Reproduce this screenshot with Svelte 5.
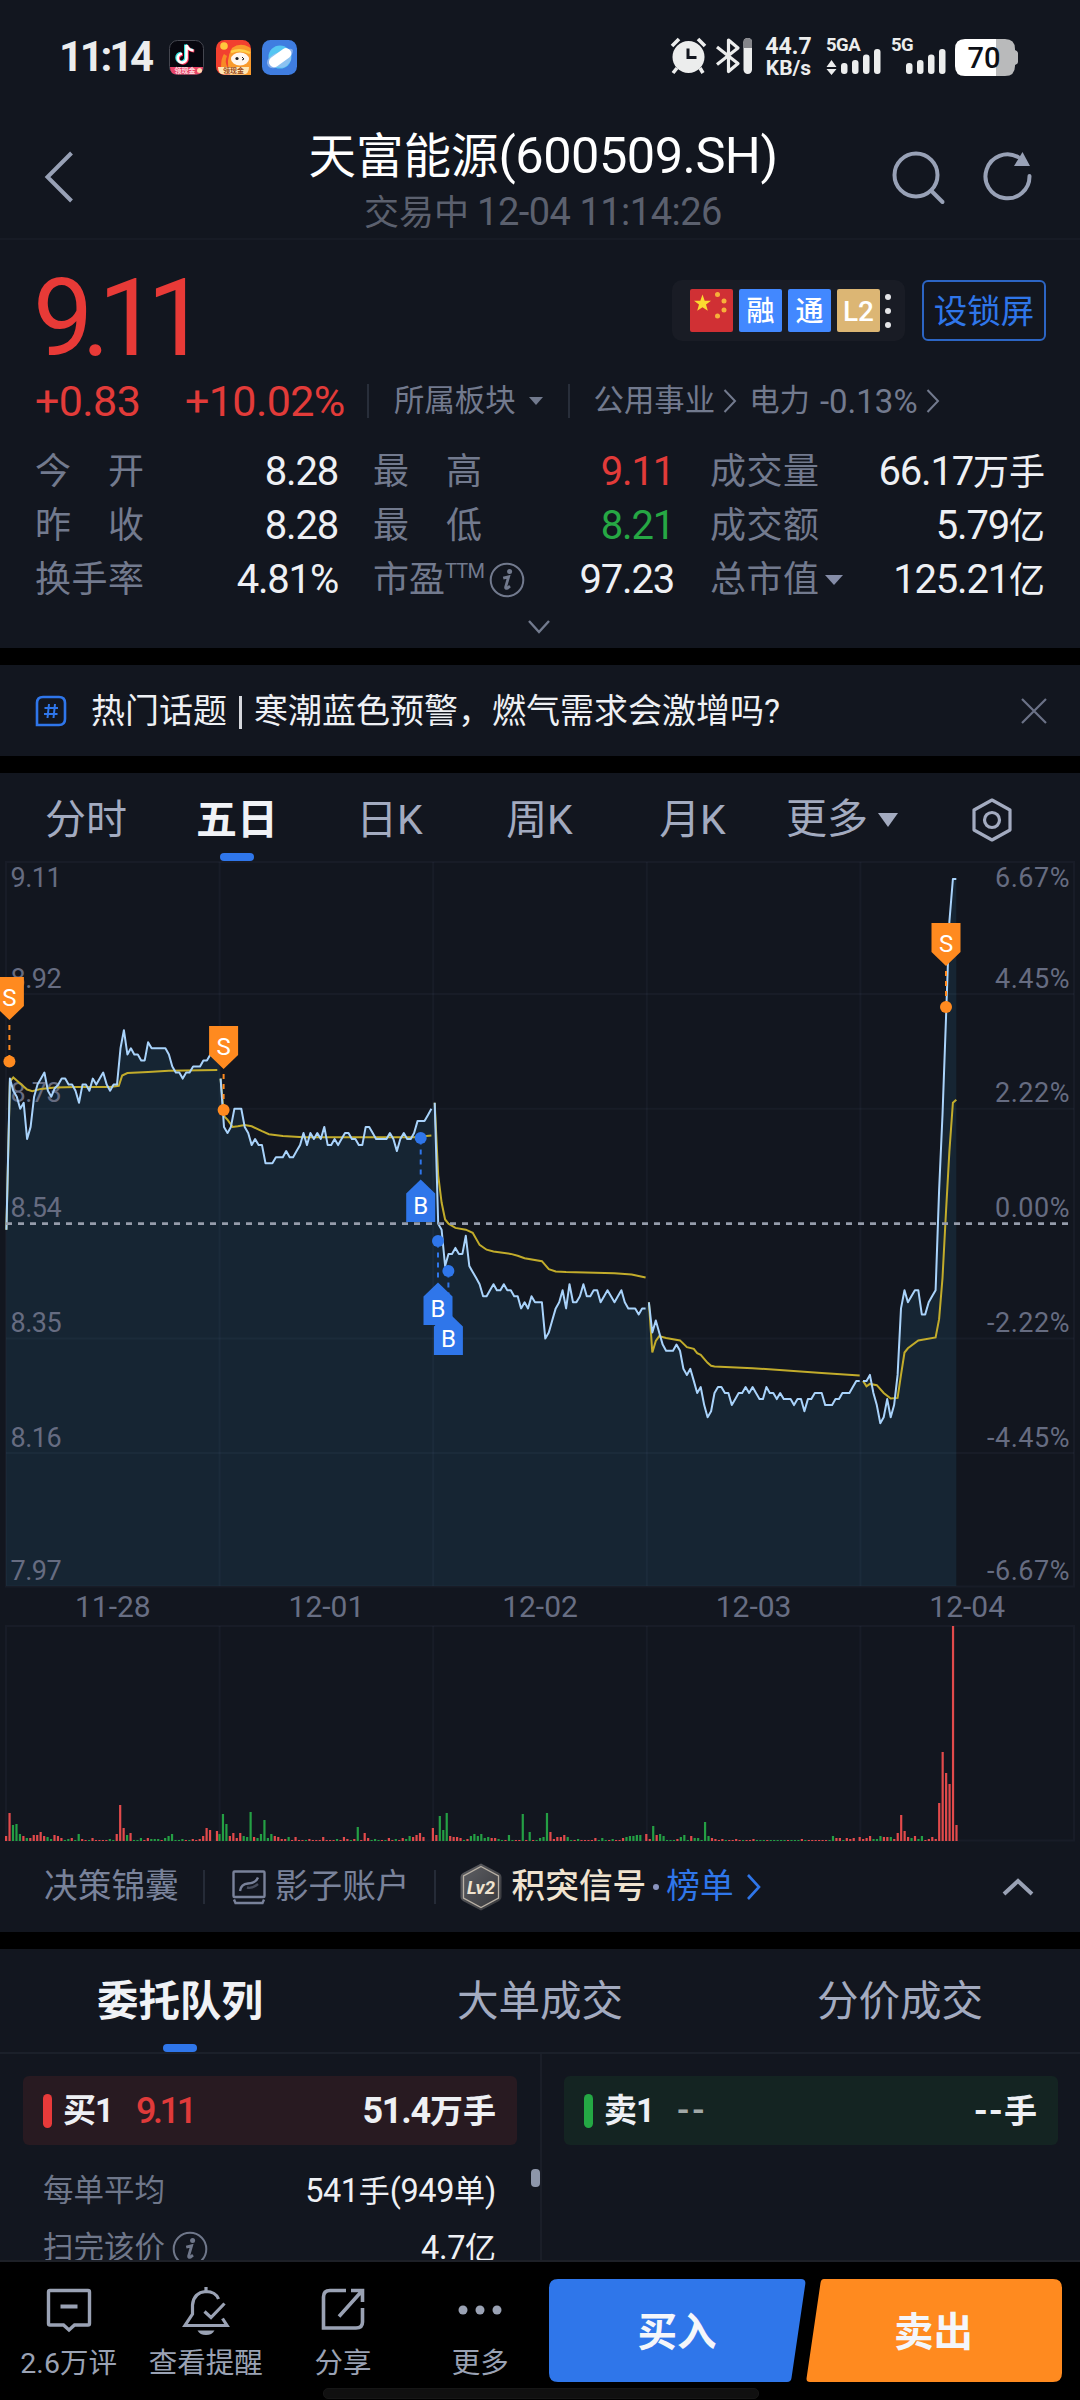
<script>
  // Prices are stored as cents above / below the 8.54 reference price.
  const days = [
    {
      label: '11-28',
      price: [-1, 24, 22, 21, 19, 20, 14, 16, 21, 23, 24, 25, 22, 21, 22.4, 23, 24, 24, 23, 23, 22, 20, 23, 23, 22, 24, 23, 24, 25, 23, 22, 23, 23, 29, 32, 28, 29, 28, 28, 27, 27, 30, 29, 29, 29, 29, 29, 28, 26, 25, 25, 24, 25, 25, 26, 26, 26, 27, 27, 28, 29, 29],
      avg: [[0, -1], [1, 23.5], [2, 24.2], [4, 23.2], [6, 22.2], [7.5, 21.9], [10, 22.3], [14, 22.5], [20, 22.6], [30, 22.6], [32.5, 22.8], [33.5, 24.5], [35, 24.9], [41, 25.1], [47, 25.3], [61, 25.4]],
      volume: [5, 28, -16, -17, -7, 5, -3, 3, 6, 6, 9, 5, -4, -2, 6, 5, 3, -1, -2, 3, -1, -7, 2, 1, -1, 3, 1, 1, 1, 1, -2, -1, 7, 36, 13, -6, 8, -1, -1, -3, 1, 3, -2, -2, -2, 1, -3, -5, -7, -1, -1, -2, 1, -1, 2, 1, 2, 5, 13, 11, 0, 10]
    },
    {
      label: '12-01',
      price: [24, 16, 15, 16, 19, 19, 19, 16, 15, 13, 14, 13, 13, 10, 10, 10, 11, 11, 11, 12, 11, 11, 12, 13, 15, 13, 15, 14, 15, 14, 16, 13, 13, 14, 13, 14, 15, 15, 14, 14, 13, 13, 16, 16, 15, 14, 14, 14, 14, 15, 14, 12, 14, 15, 14, 14, 15, 17, 17, 17, 18, 19],
      avg: [[0, 24], [1, 17.8], [2, 17.2], [3.5, 16], [5, 16.1], [7, 16.3], [9, 16.1], [12, 15.3], [14, 14.8], [18, 14.5], [24, 14.3], [56, 14.3], [61, 14.6]],
      volume: [-7, -27, -17, 5, 8, 3, 8, -5, -4, -29, 4, -3, -7, -21, -3, -7, 5, 4, 2, 2, -4, 1, 4, 1, 1, -1, 2, 1, 1, 1, 4, 1, 1, 1, -2, 1, 4, 2, -1, 2, -14, 1, 8, 3, -1, -2, -1, 1, -1, 3, 1, -2, 1, 3, -2, -5, 4, 6, 8, 4, 0]
    },
    {
      label: '12-02',
      price: [20, 0, -1, -7, -5, -5, -4, -5, -5, -2, -7, -8, -9, -10, -12, -12, -11, -10, -11, -11, -10, -11, -11, -12, -12, -14, -13, -14, -12, -13, -13, -13, -19, -18, -16, -14, -13, -11, -14, -10, -13, -13, -12, -10, -12, -12, -11, -11, -13, -12, -11, -12, -13, -12, -11, -13, -14, -14, -14, -15, -14, -14],
      avg: [[0, 20], [1, 8], [2, 3.5], [3, 0.7], [4, 0], [6, -0.7], [9, -1], [11, -1.5], [13, -3.5], [15, -4.3], [17, -4.6], [22, -5], [24, -5.3], [26, -5.7], [31, -6.2], [33, -7.5], [35, -7.9], [38, -8], [52, -8.2], [57, -8.4], [61, -8.9]],
      volume: [13, 6, -25, -11, -28, 5, 4, 4, 3, -1, 2, -5, -7, -5, -7, -3, -4, 3, 3, -2, -1, 1, -6, -1, 1, 1, -27, 1, -9, 1, -1, -3, -4, -28, 9, 2, 4, 4, 6, -4, -1, 1, -2, 1, 1, 1, 1, 3, -1, -3, -1, 1, -2, 1, 1, 3, -4, -5, -5, -6, -6, 0]
    },
    {
      label: '12-03',
      price: [-13, -18, -16, -18, -20, -21, -21, -21, -20, -21, -24, -25, -24, -26, -28, -27, -30, -32, -31, -28, -27, -27, -28, -28, -30, -29, -28, -28, -27, -28, -27, -28, -29, -29, -27, -28, -28, -29, -28, -29, -29, -29, -30, -29, -29, -31, -29, -29, -28, -28, -28, -30, -30, -30, -29, -29, -28, -28, -28, -27, -26, -26],
      avg: [[0, -13], [1, -21.3], [2, -19.4], [3, -18.6], [5, -18.9], [9, -19.3], [11, -20.4], [13, -20.7], [14, -21.4], [15, -21.7], [17, -23], [18, -23.5], [19, -23.6], [30, -23.9], [50, -24.7], [61, -25.1]],
      volume: [7, 2, -15, 6, -7, -5, -1, -1, -1, 2, -4, -6, -1, 5, -3, -3, -1, -19, -5, 3, 2, 1, 2, -1, 1, 1, 2, 1, -1, 1, 1, 2, -1, -1, -1, 1, -1, -1, -1, -1, -1, 1, -1, -1, -1, 2, -1, 1, 1, 1, 1, 1, 1, -1, -5, 3, 3, -1, 3, 2, 3, 0]
    },
    {
      label: '12-04',
      price: [-26, -26, -25, -28, -30, -33, -32, -29, -32, -30, -25, -14, -11, -13, -12, -11, -11, -15, -15, -13, -12, -11, 5.5, 18, 34, 50, 57, 57],
      avg: [[0, -26], [1, -26.9], [2, -26.5], [4, -26.7], [6, -28], [8, -28.9], [10, -28.8], [11, -25], [12, -21.3], [13, -20.6], [16, -19.3], [21, -18.8], [22, -15.8], [23, -9], [24, 2], [25, 12], [26, 20], [27, 20.5]],
      volume: [4, 2, 3, 5, -2, -2, -5, 4, 4, -4, 2, 8, 26, 10, 4, -3, 5, -2, -5, 1, 2, 4, 2, 38, 89, 68, 57, 215, 16]
    }
  ];

  const TOP = 861;
  const DAY = 213.6;
  const STEP = 3.457;
  const BASE = 1586 - TOP;
  const px = (d, i) => 6.4 + d * 214.15 + i * STEP;
  const py = (c) => 1223.7 - TOP - c * 6.047;
  const path = (d, pts) =>
    pts.map(([i, c], n) => (n ? 'L' : 'M') + px(d, i).toFixed(1) + ' ' + py(c).toFixed(1)).join('');

  const priceLines = days.map((day, d) => path(d, day.price.map((c, i) => [i, c])));
  const avgLines = days.map((day, d) => path(d, day.avg));
  const area =
    'M6 ' + BASE +
    days.map((day, d) => day.price.map((c, i) => 'L' + px(d, i).toFixed(1) + ' ' + py(c).toFixed(1)).join('')).join('') +
    'V' + BASE + 'Z';

  const bars = days.flatMap((day, d) =>
    day.volume.map((v, i) => ({ x: 5 + d * 213.4 + i * STEP, h: Math.abs(v), up: v > 0 }))
  );

  const axis = [
    { y: 877.5, price: '9.11', pct: '6.67%' },
    { y: 978, price: '8.92', pct: '4.45%' },
    { y: 1092.5, price: '8.73', pct: '2.22%' },
    { y: 1207.5, price: '8.54', pct: '0.00%' },
    { y: 1322, price: '8.35', pct: '-2.22%' },
    { y: 1437.5, price: '8.16', pct: '-4.45%' },
    { y: 1570, price: '7.97', pct: '-6.67%' }
  ];

  const sells = [
    { x: 9.4, tag: 977, dot: 1061.5 },
    { x: 223.6, tag: 1026, dot: 1110 },
    { x: 946, tag: 923, dot: 1007 }
  ];
  const buys = [
    { x: 420.7, tag: 1179.5, dot: 1138 },
    { x: 438, tag: 1282.5, dot: 1241 },
    { x: 448.4, tag: 1312.5, dot: 1271 }
  ];
</script>

{#snippet info()}
  <svg class="info" width="36" height="36" viewBox="0 0 36 36">
    <circle cx="18" cy="18" r="16.3" fill="none" stroke="currentColor" stroke-width="2" />
    <circle cx="20.6" cy="9.6" r="2.5" fill="currentColor" />
    <path d="M14.2 16.2 L19.6 14.8 L16.6 25.2 Q16.4 27 18.4 26.2 L21 24.2" fill="none" stroke="currentColor" stroke-width="2.8" />
  </svg>
{/snippet}

<div class="screen">
  <div class="status">
    <span class="clock">11:14</span>
    <svg class="app" width="35" height="35" viewBox="0 0 35 35">
      <rect x=".5" y=".5" width="34" height="34" rx="8" fill="#07070f" stroke="#44464f" />
      <path d="M1 27 H34 Q34 34.5 27 34.5 H8 Q1 34.5 1 27Z" fill="#e8456a" />
      <path d="M17.5 5 V18 A4.4 4.4 0 1 1 13 13.8 M17.5 5 Q19 10 24.5 10.5" fill="none" stroke="#35e5e0" stroke-width="3" transform="translate(-1 -.6)" />
      <path d="M17.5 5 V18 A4.4 4.4 0 1 1 13 13.8 M17.5 5 Q19 10 24.5 10.5" fill="none" stroke="#ff3458" stroke-width="3" transform="translate(.8 .6)" />
      <path d="M17.5 5 V18 A4.4 4.4 0 1 1 13 13.8 M17.5 5 Q19 10 24.5 10.5" fill="none" stroke="#fff" stroke-width="2.6" />
      <text x="16" y="33" font-size="7" fill="#ffd9df" text-anchor="middle" font-weight="700">领现金</text>
      <circle cx="30.5" cy="30.5" r="2.5" fill="#ffdcb0" />
    </svg>
    <svg class="app" width="35" height="35" viewBox="0 0 35 35">
      <rect width="35" height="35" rx="8.5" fill="#f2402f" />
      <path d="M14 35 Q9 20 16 8 Q24 2 33 7 Q35 8 35 12 V35Z" fill="#f99a2c" />
      <path d="M5 28 Q5 18 8 14 L11 16 Q8 22 12 28Z" fill="#f78b26" />
      <circle cx="8" cy="6" r="3.8" fill="#ffc83d" />
      <path d="M15 12 Q24 8 34 13" stroke="#ffd04a" stroke-width="2.5" fill="none" />
      <ellipse cx="24" cy="19" rx="9" ry="6.5" fill="#fff6ee" />
      <circle cx="21" cy="18.5" r="1.6" fill="#222" /><path d="M26 17 L28 19 L26 20" stroke="#222" fill="none" />
      <path d="M2 27 H33 Q33 34.5 27 34.5 H8 Q2 34.5 2 27Z" fill="#ffe6b5" />
      <text x="17.5" y="33" font-size="7" fill="#9b4a18" text-anchor="middle" font-weight="700">领现金</text>
    </svg>
    <svg class="app" width="35" height="35" viewBox="0 0 35 35">
      <rect width="35" height="35" rx="8.5" fill="#3f7de0" />
      <circle cx="18" cy="17" r="11.5" fill="#55c6f2" />
      <path d="M6 26 Q2 20 12 14 L26 9 Q34 7 29 16 L29 20 Q24 30 16 27 Q9 30 6 26Z" fill="#9fc0f0" opacity=".75" />
      <rect x="5.5" y="12.5" width="25" height="10.5" rx="5" fill="#fff" transform="rotate(-36 18 17.5)" />
    </svg>
    <svg class="sys" width="96" height="40" viewBox="0 0 96 40" fill="#eceded">
      <circle cx="18.5" cy="20" r="16" />
      <path d="M18 11.5 V20.5 H26.5" fill="none" stroke="#12161f" stroke-width="3" />
      <path d="M2 9 L9 2 M28 2 L35 9 M7 31 L3 36 M30 31 L33 36" stroke="#eceded" stroke-width="3.6" fill="none" />
      <path d="M47 10 L68 26.5 L58.5 34.5 V3 L68 11 L47 27.5" fill="none" stroke="#eceded" stroke-width="3.2" stroke-linejoin="round" />
      <rect x="73.5" y="1" width="8.5" height="36" rx="4.2" />
      <path d="M73.5 11 V5 Q73.5 1 77.75 1 Q82 1 82 5 V11Z" fill="#85868b" />
    </svg>
    <div class="net"><span>44.7</span><span>KB/s</span></div>
    <svg class="signal" width="126" height="40" viewBox="0 0 126 40" fill="#eceded">
      <text x="1" y="14" class="g">5GA</text>
      <path d="M1.5 30 L6.5 23 L11.5 30Z M1.5 32 L6.5 38 L11.5 32Z" />
      <rect x="16" y="26" width="6.5" height="11" rx="3" /><rect x="27" y="23" width="6.5" height="14" rx="3" /><rect x="38" y="17.5" width="6.5" height="19.5" rx="3" /><rect x="49" y="12" width="6.5" height="25" rx="3" />
      <text x="66" y="14" class="g">5G</text>
      <rect x="81" y="26" width="6.5" height="11" rx="3" /><rect x="92" y="23" width="6.5" height="14" rx="3" /><rect x="103" y="17.5" width="6.5" height="19.5" rx="3" /><rect x="114" y="12" width="6.5" height="25" rx="3" />
    </svg>
    <svg class="battery" width="64" height="37" viewBox="0 0 64 37">
      <path d="M41 0 H50 Q60 0 60 10 V11 Q63 12 63 14 V23 Q63 25 60 26 V27 Q60 37 50 37 H41Z" fill="#b9babb" />
      <path d="M41 0 H10 Q0 0 0 10 V27 Q0 37 10 37 H41Z" fill="#fff" />
      <text x="29" y="28.5" text-anchor="middle" font-size="29" font-weight="500" fill="#0c0f16">70</text>
    </svg>
  </div>

  <div class="header">
    <svg class="back" width="32" height="56" viewBox="0 0 32 56"><path d="M28.5 4 L4.5 28 L28.5 52" fill="none" stroke="currentColor" stroke-width="4" /></svg>
    <div class="title">
      <div class="name">天富能源<span>(600509.SH)</span></div>
      <div class="time">交易中<span>12-04 11:14:26</span></div>
    </div>
    <svg class="search" width="56" height="56" viewBox="0 0 56 56" fill="none" stroke="currentColor" stroke-width="4"><circle cx="25" cy="26" r="21.5" /><path d="M40.5 42 L51.5 53" stroke-linecap="round" /></svg>
    <svg class="refresh" width="56" height="56" viewBox="0 0 56 56" fill="none" stroke="currentColor" stroke-width="4"><path d="M48.5 27 A22 22 0 1 1 37 8" stroke-linecap="round" /><path d="M33 17 L41.5 3 L49 17Z" fill="currentColor" stroke="none" /></svg>
  </div>

  <section class="quote">
    <div class="top">
      <div class="last">9.11</div>
      <div class="badges">
        <svg width="43" height="43" viewBox="0 0 43 43"><rect width="43" height="43" rx="2" fill="#d03034" /><path d="M12.5 5.5 L14.7 11.7 L21 11.7 L16 15.6 L17.8 21.8 L12.5 18.2 L7.2 21.8 L9 15.6 L4 11.7 L10.3 11.7Z" fill="#fbd930" /><g fill="#f7b03a"><circle cx="27.5" cy="5.5" r="2.5" /><circle cx="34" cy="12" r="2.5" /><circle cx="34" cy="21" r="2.5" /><circle cx="27.5" cy="27" r="2.5" /></g></svg>
        <span class="sq">融</span><span class="sq">通</span><span class="sq gold">L2</span>
        <div class="dots"><i></i><i></i><i></i></div>
      </div>
      <div class="lock">设锁屏</div>
    </div>
    <div class="change">
      <span class="chg">+0.83</span><span class="chg pct">+10.02%</span>
      <i class="bar"></i><span class="plate">所属板块</span><i class="caret"></i>
      <i class="bar second"></i><span class="plate">公用事业</span>
      <svg width="14" height="26" viewBox="0 0 14 26"><path d="M1.5 2 L12 13 L1.5 24" fill="none" stroke="currentColor" stroke-width="2" /></svg>
      <span class="plate power">电力</span><span class="powerpct">-0.13%</span>
      <svg width="14" height="26" viewBox="0 0 14 26"><path d="M1.5 2 L12 13 L1.5 24" fill="none" stroke="currentColor" stroke-width="2" /></svg>
    </div>
    <div class="stats">
      <div><label><b>今</b><b>开</b></label><em>8.28</em></div>
      <div><label><b>最</b><b>高</b></label><em class="red">9.11</em></div>
      <div class="last-col"><label><b>成</b><b>交</b><b>量</b></label><em>66.17<u>万手</u></em></div>
      <div><label><b>昨</b><b>收</b></label><em>8.28</em></div>
      <div><label><b>最</b><b>低</b></label><em class="green">8.21</em></div>
      <div class="last-col"><label><b>成</b><b>交</b><b>额</b></label><em>5.79<u>亿</u></em></div>
      <div><label><b>换</b><b>手</b><b>率</b></label><em>4.81%</em></div>
      <div><span class="pe">市盈<sup>TTM</sup>{@render info()}</span><em>97.23</em></div>
      <div class="last-col"><label><b>总</b><b>市</b><b>值</b></label><i class="caret big"></i><em>125.21<u>亿</u></em></div>
    </div>
    <svg class="expand" width="24" height="16" viewBox="0 0 24 16"><path d="M2 2 L12 13 L22 2" fill="none" stroke="currentColor" stroke-width="2.4" /></svg>
  </section>

  <section class="topic">
    <svg width="32" height="32" viewBox="0 0 32 32" fill="none" stroke="#2f76ea"><path d="M8 2 H24 Q30 2 30 8 V24 Q30 30 24 30 H2 V8 Q2 2 8 2Z" stroke-width="2.6" /><path d="M14 9 L12.5 23 M20 9 L18.5 23 M9.5 13 H23 M9 19 H22.5" stroke-width="2" /></svg>
    <span class="headline">热门话题<i></i>寒潮蓝色预警，燃气需求会激增吗?</span>
    <svg class="close" width="28" height="28" viewBox="0 0 28 28"><path d="M2 2 L26 26 M26 2 L2 26" stroke="currentColor" stroke-width="2.2" /></svg>
  </section>

  <section class="chart">
    <div class="tabs">
      <span>分时</span><span class="on">五日</span><span class="k">日K</span><span class="k">周K</span><span class="k month">月K</span>
      <span class="more">更多<i class="caret tab"></i></span>
      <span class="gear"><svg width="44" height="46" viewBox="0 0 44 46" fill="none" stroke="currentColor" stroke-width="3.2"><path d="M22 3 L40 13 V33 L22 43 L4 33 V13Z" stroke-linejoin="round" /><circle cx="22" cy="23" r="7.5" /></svg></span>
    </div>
    <svg class="plot" width="1080" height="986" viewBox="0 0 1080 986">
      <path d={area} fill="#162533" />
      <g stroke="#8a9ac0" stroke-opacity=".05" stroke-width="2" fill="none">
        <rect x="6" y="1" width="1068" height="724.5" />
        <rect x="6" y="765" width="1068" height="214.5" />
        {#each [1, 2, 3, 4] as k}
          <path d="M{6 + k * DAY} 1 V725 M{6 + k * DAY} 765 V979" />
        {/each}
        {#each [994, 1108.7, 1338.5, 1453] as y}
          <path d="M6 {y - TOP} H1074" />
        {/each}
      </g>
      {#each axis as a}
        <text class="tick" x="10.5" y={a.y - TOP + 9.7}>{a.price}</text>
        <text class="tick pcts" x="1070" y={a.y - TOP + 9.7} text-anchor="end">{a.pct}</text>
      {/each}
      {#each avgLines as d}<path {d} fill="none" stroke="#c2ac2b" stroke-width="2" />{/each}
      {#each priceLines as d}<path {d} fill="none" stroke="#a9d3fb" stroke-width="2" stroke-linejoin="round" />{/each}
      <path d="M6 362.7 H1070" stroke="#959cab" stroke-width="2.8" stroke-dasharray="6 6" />
      {#each sells as s}
        <g transform="translate({s.x} {s.tag - TOP})">
          <path d="M0 43 V80" stroke="#ff8a1f" stroke-width="2" stroke-dasharray="5 5" stroke-dashoffset="5" />
          <circle cx="0" cy={s.dot - s.tag} r="6" fill="#ff8a1f" />
          <path d="M-14.5 0 H14.5 V29 L0 43 L-14.5 29Z" fill="#ff8a1f" />
          <text class="flag" y="29">S</text>
        </g>
      {/each}
      {#each buys as b}
        <g transform="translate({b.x} {b.tag - TOP})">
          <path d="M0 0 V-36" stroke="#2f76ea" stroke-width="2" stroke-dasharray="5 5" stroke-dashoffset="5" />
          <circle cx="0" cy={b.dot - b.tag} r="6" fill="#2f76ea" />
          <path d="M-14.5 42.5 H14.5 V14 L0 0 L-14.5 14Z" fill="#2f76ea" />
          <text class="flag" y="34.5">B</text>
        </g>
      {/each}
      {#each days as day, d}
        <text class="date" x={6 + (d + 0.5) * DAY} y="756" text-anchor="middle">{day.label}</text>
      {/each}
      {#each bars as b}
        <rect x={b.x} y={980 - b.h} width="2.2" height={b.h} fill={b.up ? '#e24a4b' : '#249f44'} />
      {/each}
    </svg>
    <div class="tools">
      <span>决策锦囊</span><i class="bar"></i>
      <svg class="shadow" width="34" height="35" viewBox="0 0 34 35" fill="none" stroke="currentColor" stroke-width="2.4"><rect x="1.5" y="1.5" width="31" height="25.5" rx="1" /><path d="M2 29.5 L3.5 33 H30.5 L32 29.5" /><path d="M8 21 Q9 14 16 13.5 Q24 13 26 7.5" /><path d="M15 17.5 Q20 19 26 14" opacity=".5" /></svg>
      <span>影子账户</span><i class="bar"></i>
      <svg class="lv" width="44" height="50" viewBox="0 0 44 50">
        <defs><linearGradient id="lvg" x1="0" y1="0" x2="1" y2="1"><stop offset="0" stop-color="#5f6065" /><stop offset="1" stop-color="#36373b" /></linearGradient></defs>
        <path d="M22 1.5 L40 11 Q42.5 12.5 42.5 15 V35 Q42.5 37.5 40 39 L22 48.5 L4 39 Q1.5 37.5 1.5 35 V15 Q1.5 12.5 4 11Z" fill="url(#lvg)" />
        <path d="M22 4.5 L39.5 14 V36 L22 45.5 L4.5 36 V14Z" fill="none" stroke="#b9b1a5" stroke-width="1.3" />
        <text x="22" y="31.5" text-anchor="middle" font-size="18.5" font-weight="700" font-style="italic" fill="#efe3cf">Lv2</text>
      </svg>
      <span class="signalname">积突信号</span><i class="dot"></i><span class="rank">榜单</span>
      <svg class="go" width="16" height="28" viewBox="0 0 16 28"><path d="M2 2 L13 14 L2 26" fill="none" stroke="#2f76ea" stroke-width="2.6" /></svg>
      <svg class="up" width="34" height="20" viewBox="0 0 34 20"><path d="M3 17 L17 4 L31 17" fill="none" stroke="#9aa2b5" stroke-width="4" /></svg>
    </div>
  </section>

  <section class="orders">
    <div class="otabs"><span class="on">委托队列</span><span>大单成交</span><span>分价成交</span></div>
    <div class="cols">
      <div class="col">
        <div class="card buy"><i></i><b>买1</b><strong>9.11</strong><em>51.4<u>万手</u></em></div>
        <div class="line"><span>每单平均</span><em>541<u>手</u>(949<u>单</u>)</em></div>
        <div class="line"><span>扫完该价</span>{@render info()}<em>4.7<u>亿</u></em></div>
        <div class="thumb"></div>
      </div>
      <div class="col">
        <div class="card sell"><i></i><b>卖1</b><strong>--</strong><em>--<u>手</u></em></div>
      </div>
    </div>
  </section>

  <div class="bottom">
    <div class="item">
      <svg width="52" height="52" viewBox="0 0 52 52" fill="none" stroke="currentColor" stroke-width="3.4"><path d="M7 6.5 H45 Q46.5 6.5 46.5 8 V39.5 Q46.5 41 45 41 H31.5 L26 46 L20.5 41 H7 Q5.5 41 5.5 39.5 V8 Q5.5 6.5 7 6.5Z" /><path d="M17.5 22.5 H34.5" stroke-width="4" /></svg>
      <span>2.6万评</span>
    </div>
    <div class="item">
      <svg width="52" height="52" viewBox="0 0 52 52" fill="none" stroke="currentColor" stroke-width="3.2"><path d="M26 3 V8 M38.5 15 Q35.5 7.500 26 7.5 Q13.5 8.5 12.5 21 V30 L5 41.5 H47 L42.5 34.5 M24.5 27.5 L31 33.5 L44.5 19.5" /><path d="M17.5 46.5 H34.5 Q32 51 26 51 Q20 51 17.5 46.5Z" fill="currentColor" stroke="none" /></svg>
      <span>查看提醒</span>
    </div>
    <div class="item">
      <svg width="52" height="52" viewBox="0 0 52 52" fill="none" stroke="currentColor" stroke-width="3.6"><path d="M29 6.500 H13 Q6.5 6.5 6.5 13 V44 H39 Q45.5 44 45.5 38 V24 M34 6.5 H45.5 V18 M44 8 L22 32.5" /></svg>
      <span>分享</span>
    </div>
    <div class="item">
      <svg width="52" height="52" viewBox="0 0 52 52" fill="currentColor"><circle cx="9" cy="26" r="4.5" /><circle cx="26" cy="26" r="4.5" /><circle cx="43" cy="26" r="4.5" /></svg>
      <span>更多</span>
    </div>
    <div class="trade">
      <svg width="513" height="104" viewBox="0 0 513 104">
        <path d="M9 0 H252 Q257 0 256.3 5 L242.5 99 Q242 103 238 103 H9 Q0 103 0 94 V9 Q0 0 9 0Z" fill="#2f76ea" />
        <path d="M275 0 H504 Q513 0 513 9 V94 Q513 103 504 103 H261 Q257 103 257.6 99 L271.5 4 Q272 0 275 0Z" fill="#ff8a1f" />
        <text x="128" y="66.5" text-anchor="middle">买入</text>
        <text x="384.5" y="66.5" text-anchor="middle">卖出</text>
      </svg>
      <div class="home"></div>
    </div>
  </div>
</div>

<style>
  :global(body) { margin: 0; background: #000; }
  .screen {
    width: 1080px; height: 2400px; overflow: hidden; background: #000;
    display: flex; flex-direction: column; color: #eef0f4;
    font-family: Roboto, "Noto Sans CJK SC", sans-serif; line-height: 1;
  }
  svg { display: block; flex: none; overflow: visible; }
  svg text { font-family: Roboto, "Noto Sans CJK SC", sans-serif; }
  i, em { font-style: normal; }
  u { text-decoration: none; }
  .screen > * { flex: none; box-sizing: border-box; }
  section, .header, .status { background: #12161f; }

  .status { height: 114px; display: flex; align-items: center; padding: 0 20px 0 59px; }
  .clock { width: 110px; font-size: 42px; font-weight: 700; letter-spacing: -3.3px; color: #eceded; white-space: nowrap; }
  .app { margin-right: 11.5px; }
  .sys { margin-left: 361px; }
  .net { width: 52px; display: flex; flex-direction: column; align-items: center; font-size: 21px; font-weight: 700; color: #eceded; margin-left: -3px; }
  .net span:first-child { font-size: 23px; }
  .signal { margin-left: 10px; }
  .g { font-size: 18.5px; font-weight: 700; letter-spacing: -.5px; }
  .battery { margin-left: 4px; }

  .header { height: 126px; display: flex; align-items: flex-start; color: #98a1b6; border-bottom: 2px solid #171b25; }
  .back { margin: 35px 0 0 43px; }
  .title { width: 700px; margin-left: 118px; display: flex; flex-direction: column; align-items: center; }
  .name { margin-top: 17px; font-size: 47.5px; line-height: 50px; color: #fff; white-space: nowrap; }
  .name span { font-size: 50.5px; letter-spacing: -.5px; }
  .time { margin-top: 10px; font-size: 35px; line-height: 40px; color: #5b606e; white-space: nowrap; }
  .time span { font-size: 38px; margin-left: 8px; letter-spacing: -.5px; }
  .search { margin: 35px 0 0 -2px; }
  .refresh { margin: 35px 0 0 34px; }

  .quote { height: 408px; padding: 0 34px 0 35px; display: flex; flex-direction: column; }
  .top { height: 118px; padding-top: 24px; box-sizing: border-box; display: flex; align-items: flex-start; }
  .last { flex: 1; font-size: 107px; letter-spacing: -11.5px; color: #e83a37; line-height: 109px; margin-left: -2px; }
  .badges { display: flex; align-items: center; gap: 6px; width: 233px; height: 61px; padding-left: 18px; box-sizing: border-box; background: #191c25; border-radius: 10px; margin-top: 16px; }
  .sq { width: 43px; height: 43px; border-radius: 2px; background: #4288ff; color: #fff; font-size: 28px; font-weight: 500; line-height: 45px; text-align: center; }
  .gold { background: #dcb674; }
  .dots { display: flex; flex-direction: column; gap: 8px; margin-left: -1px; }
  .dots i { width: 6px; height: 6px; border-radius: 50%; background: #e4e5e8; }
  .lock { width: 124px; height: 61px; box-sizing: border-box; border: 2px solid #2c65c4; border-radius: 6px; margin: 16px 0 0 17px; color: #2f76ea; font-size: 33.5px; line-height: 60px; text-align: center; white-space: nowrap; }
  .change { display: flex; align-items: center; height: 40px; margin-top: 23px; color: #727a8e; white-space: nowrap; }
  .chg { font-size: 43px; color: #e23b39; width: 150px; letter-spacing: -.6px; }
  .pct { width: 182px; }
  .bar { width: 2px; height: 34px; background: #282e3a; }
  .plate { font-size: 30.4px; margin-left: 25px; }
  .caret { width: 0; height: 0; border: 7px solid transparent; border-top: 8px solid #727a8e; border-bottom: 0; margin-left: 13px; }
  .second { margin-left: 25px; }
  .second + .plate { margin-left: 24px; }
  .change svg { margin-left: 8px; }
  .power { margin-left: 12px; }
  .powerpct { font-size: 33px; margin-left: 10px; }
  .stats { display: grid; grid-template-columns: 303px 301px 336px; column-gap: 35px; grid-auto-rows: 54px; margin-top: 24px; color: #727a8e; }
  .stats div { display: flex; align-items: center; }
  .stats .last-col { padding-left: 1px; }
  label { width: 109px; display: flex; justify-content: space-between; font-size: 36px; }
  b { font-weight: 400; }
  em { margin-left: auto; font-size: 40px; letter-spacing: -1.2px; color: #eef0f4; white-space: nowrap; }
  em u { font-size: 36px; letter-spacing: 0; }
  .red { color: #e23b39; }
  .green { color: #26a844; }
  .pe { display: flex; font-size: 36px; align-items: center; }
  .pe sup { font-size: 20px; align-self: flex-start; line-height: 18px; margin: 0 5px 0 0; vertical-align: top; letter-spacing: -.8px; }
  .big { border-width: 10px 9px 0; border-top-color: #858da8; margin-left: 6px; }
  .expand { margin: 12px auto 0 492px; color: #727a8e; }

  .topic { height: 91px; margin: 17px 0; padding: 0 32px 0 35px; display: flex; align-items: center; }
  .headline { flex: 1; margin-left: 24px; font-size: 34px; white-space: nowrap; display: flex; align-items: center; }
  .headline i { width: 3px; height: 33px; margin: 4px 12px 0; background: #d5d7dc; }
  .close { color: #6b7287; }

  .chart { height: 1159px; }
  .tabs { height: 88px; display: flex; align-items: center; color: #a3abc0; font-size: 41px; padding: 5px 0 0 11px; box-sizing: border-box; }
  .tabs span { width: 150px; box-sizing: border-box; text-align: center; white-space: nowrap; height: 83px; line-height: 85px; position: relative; }
  .tabs .on { color: #f0f2f6; font-weight: 700; width: 152px; }
  .tabs .k { padding-left: 3px; }
  .tabs .month { padding-left: 9px; }
  .tabs .on::after, .otabs .on::after { content: ""; position: absolute; left: 50%; margin-left: -17px; bottom: 0; width: 34px; height: 8px; border-radius: 4px; background: #2f76ea; }
  .tabs .more { display: flex; align-items: center; width: 148px; padding-left: 23px; }
  .tab { border-width: 14px 10px 0; border-top-color: #a3abc0; margin-left: 10px; }
  .tabs .gear { display: flex; align-items: center; justify-content: center; width: 161px; }
  .plot { height: 986px; }
  .tick { font-size: 27px; fill: #666c81; letter-spacing: -.5px; }
  .pcts { letter-spacing: .5px; }
  .date { font-size: 30px; fill: #686e83; }
  .flag { font-size: 24px; fill: #fff; text-anchor: middle; }
  .tools { height: 80px; display: flex; align-items: center; padding: 0 44px; font-size: 33.7px; color: #79829a; white-space: nowrap; }
  .tools .bar { margin: 0 27px 0 24px; background: #252b37; }
  .shadow { margin-right: 9px; }
  .tools .lv { margin: 0 9px 0 -4px; }
  .signalname { color: #efe3cf; font-weight: 500; }
  .dot { width: 6px; height: 6px; border-radius: 50%; background: #8a94c0; margin: 0 7px; }
  .rank { color: #2f76ea; }
  .go { margin-left: 12px; }
  .up { margin-left: auto; margin-right: 1px; }

  .orders { height: 311px; margin-top: 17px; overflow: hidden; }
  .otabs { display: flex; height: 105px; box-sizing: border-box; border-bottom: 2px solid #1b202a; font-size: 41.5px; color: #a3abc0; }
  .otabs span { flex: 1; text-align: center; line-height: 106px; height: 103px; position: relative; }
  .otabs .on { color: #f0f2f6; font-weight: 700; }
  .cols { display: grid; grid-template-columns: 540px 540px; height: 240px; }
  .col { padding: 22px 23px; box-sizing: border-box; position: relative; }
  .col + .col { border-left: 2px solid #1a1e28; padding-right: 22px; padding-left: 22px; }
  .card { height: 69px; display: flex; align-items: center; border-radius: 6px; padding: 0 21px 0 20px; font-size: 33px; }
  .card i { width: 9px; height: 34px; border-radius: 4.5px; }
  .card b { font-weight: 700; margin-left: 11px; letter-spacing: -1px; }
  .card strong { font-weight: 500; font-size: 36px; letter-spacing: -3.4px; margin-left: 23px; }
  .card em { font-size: 36px; font-weight: 700; }
  .card em u { font-size: 33px; }
  .buy { background: #281a21; }
  .buy i { background: #e83a3a; }
  .buy strong { color: #e03a3a; }
  .sell { background: #142422; }
  .sell i { background: #24a844; }
  .sell strong { color: #a2a9a8; letter-spacing: 3px; }
  .sell em { letter-spacing: 1px; }
  .line { height: 57px; display: flex; align-items: center; padding: 0 21px 0 20px; font-size: 30.5px; color: #6f778a; }
  .card + .line { margin-top: 18px; }
  .line em { font-size: 32.5px; letter-spacing: -.4px; }
  .line em u { font-size: 31px; }
  .line :global(.info) { margin-left: 7px; }
  .thumb { position: absolute; right: 0; top: 115px; width: 9px; height: 18px; border-radius: 4px; background: #8d96aa; }

  .bottom { height: 140px; display: flex; border-top: 2px solid #1d2027; color: #9aa2b4; background: #000; }
  .item { width: 137.25px; padding-top: 22px; display: flex; flex-direction: column; align-items: center; font-size: 28.5px; white-space: nowrap; }
  .item span { margin-top: 12px; line-height: 31px; }
  .trade { padding-top: 17px; position: relative; }
  .trade text { font-size: 39.5px; font-weight: 700; fill: #f4f6fa; }
  .home { position: absolute; left: -226px; top: 126px; width: 434px; height: 9px; border-radius: 5px; background: #101010; border: 1px solid #161616; }
</style>
